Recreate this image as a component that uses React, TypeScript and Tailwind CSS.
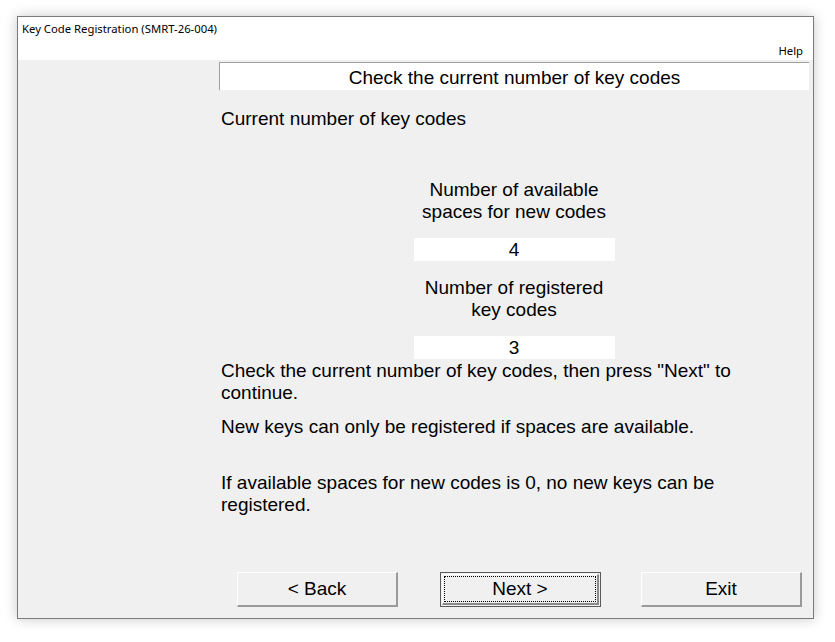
import React from 'react';

const Btn = ({ label, primary }: { label: string; primary?: boolean }) =>
  primary ? (
    <button className="w-[161px] h-[35px] border border-[#5a5a5a] bg-[#f0f0f0] p-[1px]">
      <div className="h-full w-full border-t border-l border-r-2 border-b-2 border-t-white border-l-white border-r-[#8a8a8a] border-b-[#8a8a8a] p-[1px]">
        <div className="h-full w-full border border-dotted border-black flex items-center justify-center text-[19px] text-black">
          {label}
        </div>
      </div>
    </button>
  ) : (
    <button className="w-[161px] h-[35px] border-t border-l border-r-2 border-b-2 border-t-white border-l-white border-r-[#9a9a9a] border-b-[#9a9a9a] bg-[#f0f0f0] flex items-center justify-center text-[19px] text-black">
      {label}
    </button>
  );

const App = () => {
  return (
    <div className="w-[835px] h-[642px] bg-white pt-[16px] pl-[17px] font-['Liberation_Sans',Arial,sans-serif]">
      <div className="w-[797px] h-[603px] border border-[#7a7a7a] bg-[#f0f0f0] shadow-[0_0_12px_rgba(0,0,0,0.22)] flex flex-col">
        {/* title + menu */}
        <div className="bg-white h-[43px] flex flex-col font-['Noto_Sans',sans-serif] text-[11.3px] text-black">
          <div className="pl-[4px] pt-[4px] leading-[16px]">Key Code Registration (SMRT-26-004)</div>
          <div className="mt-auto flex justify-end pr-[10px] pb-[1px] leading-[16px]">Help</div>
        </div>

        <div className="flex flex-1">
          <div className="w-[201px] shrink-0" />
          <div className="w-[590px] flex flex-col text-[19px] leading-[22px] text-black">
            <div className="mt-[2px] h-[28px] pt-[3px] bg-white border-t border-l border-[#a0a0a0] flex items-center justify-center">
              Check the current number of key codes
            </div>
            <div className="mt-[17px] pt-[1px] pl-[2px]">Current number of key codes</div>

            <div className="mt-[48px] flex flex-col items-center text-center">
              <div className="pt-[1px]">
                Number of available
                <br />
                spaces for new codes
              </div>
              <div className="mt-[15px] w-[201px] h-[23px] bg-white flex items-center justify-center">4</div>
              <div className="mt-[16px]">
                Number of registered
                <br />
                key codes
              </div>
              <div className="mt-[15px] w-[201px] h-[23px] bg-white flex items-center justify-center">3</div>
            </div>

            <div className="pt-[1px] pl-[2px] pr-[70px]">
              Check the current number of key codes, then press "Next" to continue.
            </div>
            <div className="mt-[12px] pl-[2px]">New keys can only be registered if spaces are available.</div>
            <div className="mt-[34px] pl-[2px] pr-[80px]">
              If available spaces for new codes is 0, no new keys can be registered.
            </div>

            <div className="mt-[56px] flex pl-[18px]">
              <Btn label="< Back" />
              <div className="w-[42px]" />
              <Btn label="Next >" primary />
              <div className="w-[40px]" />
              <Btn label="Exit" />
            </div>
          </div>
        </div>
      </div>
    </div>
  );
};

export default App;
